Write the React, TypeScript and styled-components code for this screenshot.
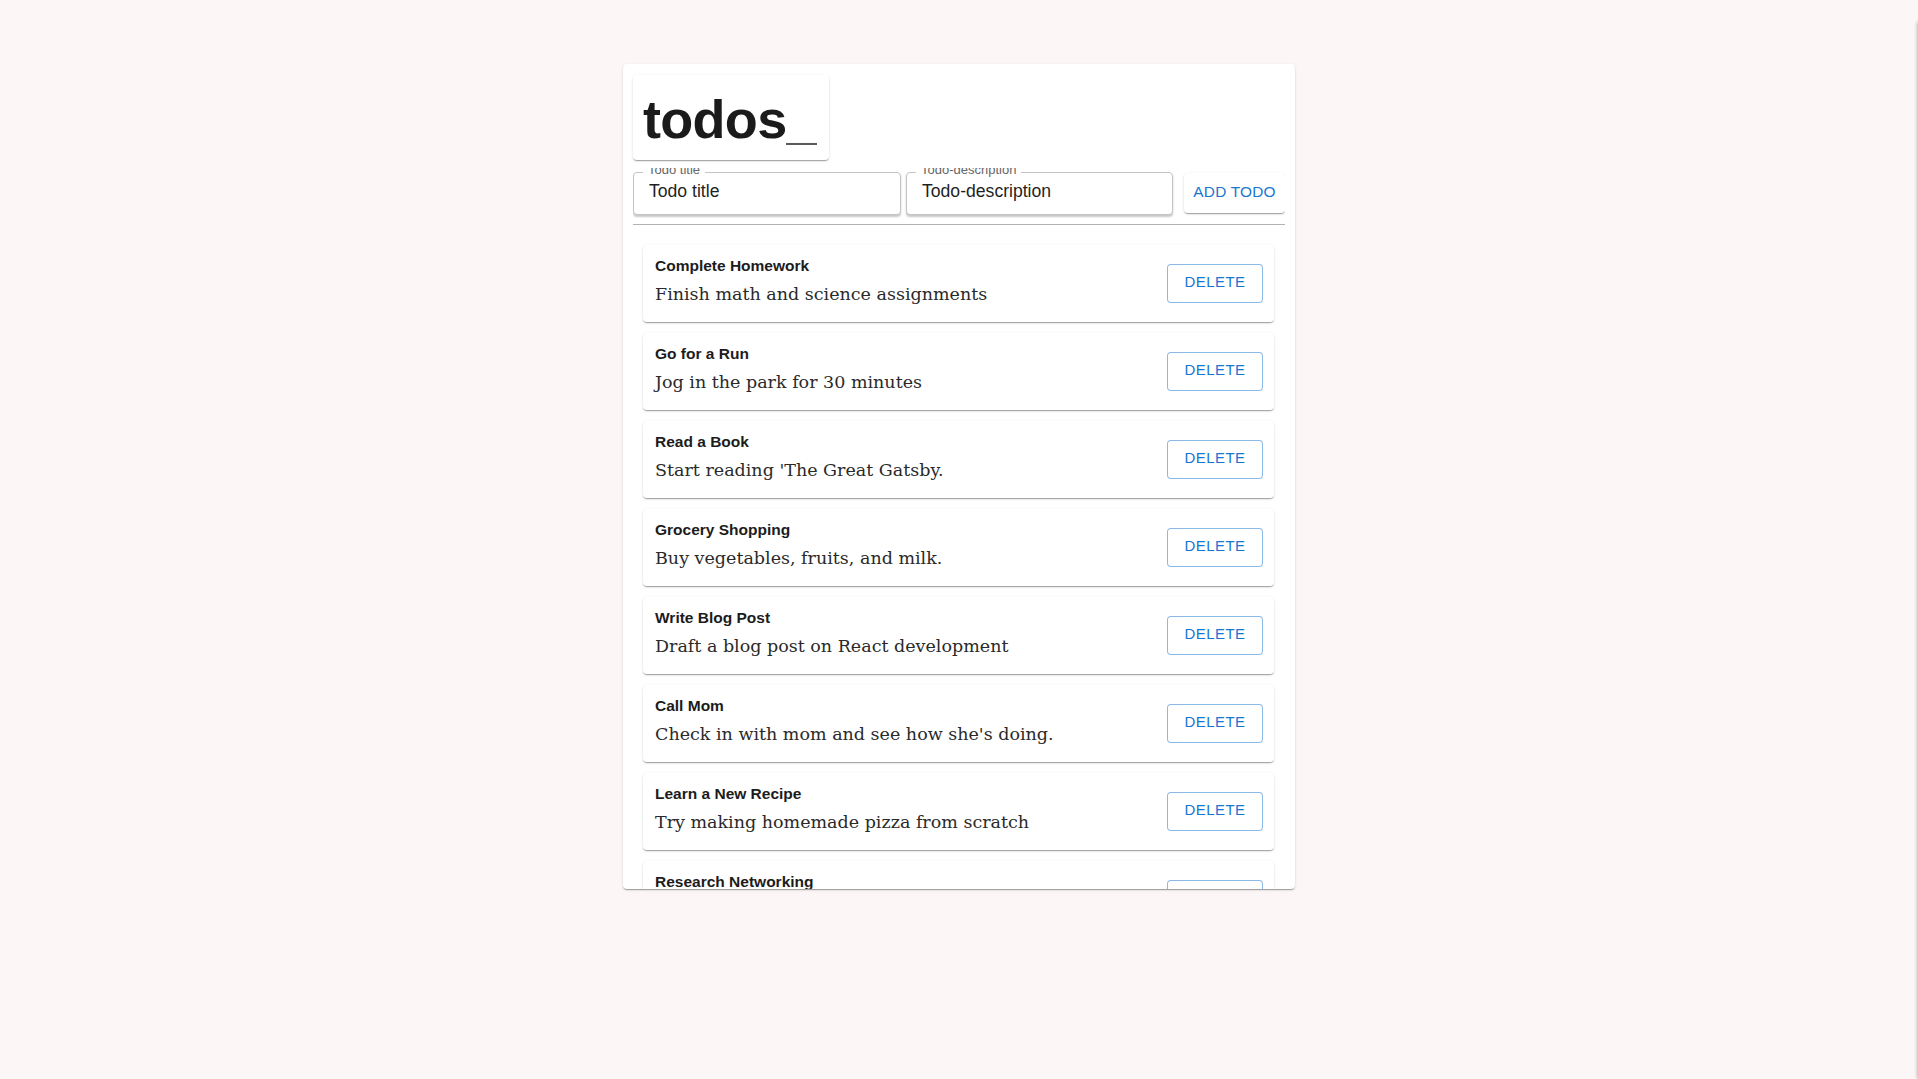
import React from "react";
import styled, { createGlobalStyle } from "styled-components";

const GlobalStyle = createGlobalStyle`
  html, body { margin: 0; padding: 0; background: #fcf6f6; }
  body { font-family: "Liberation Sans", Arial, sans-serif; }
  * { box-sizing: border-box; }
`;

const elevation1 =
  "0px 2px 1px -1px rgba(0,0,0,0.2), 0px 1px 1px 0px rgba(0,0,0,0.14), 0px 1px 3px 0px rgba(0,0,0,0.12)";

const Page = styled.div`
  display: flex;
  justify-content: center;
  padding-top: 64px;
  min-height: 100vh;
`;

const EdgeShadow = styled.div`
  position: fixed;
  top: 22px;
  bottom: 0;
  left: 1918px;
  width: 20px;
  box-shadow: 0 0 4px rgba(0, 0, 0, 0.4);
  background: #fff;
`;

const Card = styled.div`
  width: 672px;
  height: 825px;
  background: #fff;
  border-radius: 4px;
  box-shadow: ${elevation1};
  padding: 11px 10px 0 10px;
  display: flex;
  flex-direction: column;
  overflow: hidden;
  & > * {
    flex: none;
  }
`;

const HeaderPaper = styled.div`
  width: 196px;
  height: 85px;
  background: #fff;
  border-radius: 4px;
  box-shadow: ${elevation1};
  padding: 0 0 0 10px;
  display: flex;
  align-items: center;
`;

const Heading = styled.h1`
  margin: 0;
  font-family: "Liberation Sans", Arial, sans-serif;
  font-weight: 700;
  font-size: 54px;
  line-height: 1;
  color: #1b1b1b;
  letter-spacing: -0.7px;
  padding-top: 2px;
`;

const Cursor = styled.span`
  color: #5b5b5b;
`;

const FormRow = styled.div`
  display: flex;
  align-items: flex-start;
  margin-top: 8px;
  padding-top: 4px;
  overflow: hidden;
  height: 56px;
`;

const Field = styled.div<{ $w: number; $mr: number }>`
  position: relative;
  flex: none;
  width: ${(p) => p.$w}px;
  margin-right: ${(p) => p.$mr}px;
  height: 43px;
  border: 1px solid #c4c4c4;
  border-radius: 4px;
  background: #fff;
  box-shadow: 0px 2px 2px rgba(0, 0, 0, 0.22);
  display: flex;
  align-items: center;
  padding: 0 13px 5px 15px;
`;

const FieldLabel = styled.span`
  position: absolute;
  top: -10px;
  left: 9px;
  padding: 0 5px;
  background: #fff;
  font-size: 13px;
  line-height: 14px;
  color: #666;
`;

const FieldValue = styled.span`
  font-size: 17.6px;
  color: #1f1f1f;
`;

const AddButton = styled.button`
  flex: none;
  width: 101px;
  height: 40px;
  margin-top: 1px;
  border: none;
  border-radius: 4px;
  background: #fff;
  box-shadow: ${elevation1};
  color: #1976d2;
  font-family: "Liberation Sans", Arial, sans-serif;
  font-size: 15.4px;
  letter-spacing: 0.2px;
  text-transform: uppercase;
  padding: 0 0 3px 0;
`;

const Divider = styled.hr`
  margin: 0;
  border: none;
  border-top: 1px solid #b2b2b2;
  height: 0;
`;

const List = styled.ul`
  list-style: none;
  margin: 0;
  padding: 20px 11px 0 10px;
  display: flex;
  flex-direction: column;
  gap: 11px;
`;

const Item = styled.li`
  flex: none;
  height: 77px;
  background: #fff;
  border-radius: 4px;
  box-shadow: ${elevation1};
  display: flex;
  align-items: center;
  justify-content: space-between;
  padding: 0 11px 0 12px;
`;

const ItemText = styled.div`
  align-self: flex-start;
  padding-top: 12px;
  display: flex;
  flex-direction: column;
  gap: 7px;
`;

const ItemTitle = styled.div`
  font-family: "Liberation Sans", Arial, sans-serif;
  font-weight: 700;
  font-size: 15.5px;
  line-height: 18px;
  color: #1c1c1c;
`;

const ItemDesc = styled.div`
  font-family: "DejaVu Serif", serif;
  font-size: 17.5px;
  line-height: 24px;
  color: #2a2a2a;
`;

const DeleteButton = styled.button`
  flex: none;
  width: 96px;
  height: 39px;
  border: 1px solid rgba(25, 118, 210, 0.5);
  border-radius: 4px;
  background: #fff;
  color: #1976d2;
  font-family: "Liberation Sans", Arial, sans-serif;
  font-size: 15px;
  letter-spacing: 0.4px;
  padding: 0 0 4px 0;
`;

const todos = [
  { title: "Complete Homework", desc: "Finish math and science assignments" },
  { title: "Go for a Run", desc: "Jog in the park for 30 minutes" },
  { title: "Read a Book", desc: "Start reading 'The Great Gatsby." },
  { title: "Grocery Shopping", desc: "Buy vegetables, fruits, and milk." },
  { title: "Write Blog Post", desc: "Draft a blog post on React development" },
  { title: "Call Mom", desc: "Check in with mom and see how she's doing." },
  { title: "Learn a New Recipe", desc: "Try making homemade pizza from scratch" },
  { title: "Research Networking", desc: "Learn about computer networking basics" },
];

export default function App() {
  return (
    <>
      <GlobalStyle />
      <EdgeShadow />
      <Page>
        <Card>
          <div>
            <HeaderPaper>
              <Heading>
                todos<Cursor>_</Cursor>
              </Heading>
            </HeaderPaper>
          </div>
          <FormRow>
            <Field $w={268} $mr={5}>
              <FieldLabel>Todo title</FieldLabel>
              <FieldValue>Todo title</FieldValue>
            </Field>
            <Field $w={267} $mr={11}>
              <FieldLabel>Todo-description</FieldLabel>
              <FieldValue>Todo-description</FieldValue>
            </Field>
            <AddButton>Add Todo</AddButton>
          </FormRow>
          <Divider />
          <List>
            {todos.map((t) => (
              <Item key={t.title}>
                <ItemText>
                  <ItemTitle>{t.title}</ItemTitle>
                  <ItemDesc>{t.desc}</ItemDesc>
                </ItemText>
                <DeleteButton>DELETE</DeleteButton>
              </Item>
            ))}
          </List>
        </Card>
      </Page>
    </>
  );
}
